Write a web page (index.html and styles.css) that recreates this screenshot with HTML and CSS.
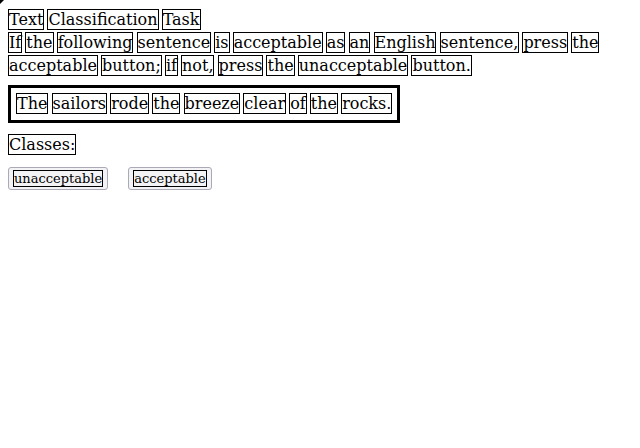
FILE: index.html
```html
<!DOCTYPE html>
<html>
<head>
<meta charset="utf-8">
<link rel="stylesheet" href="styles.css">
</head>
<body>
<div class="corner"></div>
<div class="title"><span class="w">Text</span> <span class="w">Classification</span> <span class="w">Task</span></div>
<div class="instr"><span class="w">If</span> <span class="w">the</span> <span class="w">following</span> <span class="w">sentence</span> <span class="w">is</span> <span class="w">acceptable</span> <span class="w">as</span> <span class="w">an</span> <span class="w">English</span> <span class="w">sentence,</span> <span class="w">press</span> <span class="w">the</span> <span class="w">acceptable</span> <span class="w">button;</span> <span class="w">if</span> <span class="w">not,</span> <span class="w">press</span> <span class="w">the</span> <span class="w">unacceptable</span> <span class="w">button.</span></div>
<div class="sentence"><span class="w">The</span> <span class="w">sailors</span> <span class="w">rode</span> <span class="w">the</span> <span class="w">breeze</span> <span class="w">clear</span> <span class="w">of</span> <span class="w">the</span> <span class="w">rocks.</span></div>
<div class="classes"><span class="w">Classes:</span></div>
<div class="buttons">
<button class="btn"><span class="w">unacceptable</span></button>
<button class="btn"><span class="w">acceptable</span></button>
</div>
</body>
</html>
```
FILE: styles.css
```css
html, body {
  background: #fff;
}
body {
  margin: 8px;
  font-family: "DejaVu Serif", serif;
  font-size: 16px;
  line-height: 23px;
  word-spacing: -2px;
  color: #000;
}
.corner {
  position: absolute;
  left: 0;
  top: 0;
  width: 0;
  height: 0;
  border-top: 4px solid #000;
  border-right: 4px solid transparent;
}
.w {
  border: 1px solid #000;
}
.sentence {
  display: inline-block;
  border: 3px solid #000;
  padding: 5px 5px;
  margin-top: 8px;
  line-height: 22px;
}
.classes {
  margin-top: 10px;
}
.buttons {
  display: flex;
  gap: 20px;
  margin-top: 11px;
}
.btn {
  font-family: "DejaVu Serif", serif;
  font-size: 13px;
  line-height: 16px;
  word-spacing: normal;
  padding: 3px 4px 2px;
  background: #f3f3f6;
  border: 1px solid #a9a9b8;
  border-radius: 3px;
  color: #000;
}
.btn .w {
  border: 1px solid #000;
}
```
